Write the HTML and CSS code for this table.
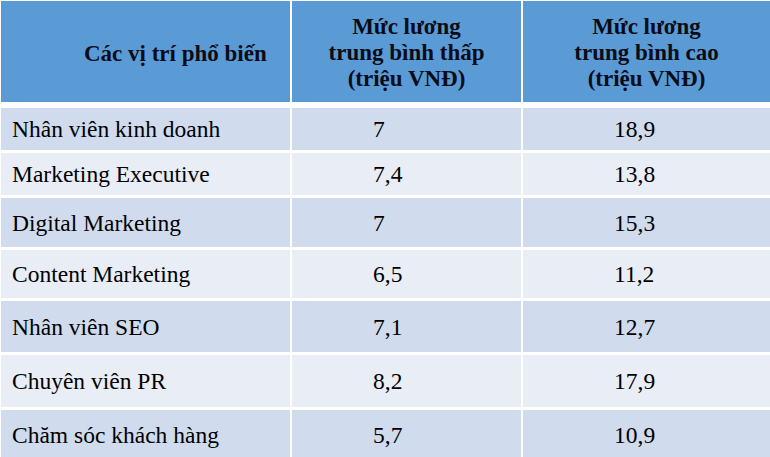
FILE: index.html
```html
<!DOCTYPE html>
<html>
<head>
<meta charset="utf-8">
<title>Mức lương</title>
<link rel="stylesheet" href="styles.css">
</head>
<body>
<div class="table">
  <div class="cell head head-first">Các vị trí phổ biến</div>
  <div class="cell head">Mức lương<br>trung bình thấp<br>(triệu VNĐ)</div>
  <div class="cell head">Mức lương<br>trung bình cao<br>(triệu VNĐ)</div>

  <div class="cell dark c1">Nhân viên kinh doanh</div>
  <div class="cell dark c2">7</div>
  <div class="cell dark c3">18,9</div>

  <div class="cell light c1">Marketing Executive</div>
  <div class="cell light c2">7,4</div>
  <div class="cell light c3">13,8</div>

  <div class="cell dark c1">Digital Marketing</div>
  <div class="cell dark c2">7</div>
  <div class="cell dark c3">15,3</div>

  <div class="cell light c1">Content Marketing</div>
  <div class="cell light c2">6,5</div>
  <div class="cell light c3">11,2</div>

  <div class="cell dark c1">Nhân viên SEO</div>
  <div class="cell dark c2">7,1</div>
  <div class="cell dark c3">12,7</div>

  <div class="cell light c1">Chuyên viên PR</div>
  <div class="cell light c2">8,2</div>
  <div class="cell light c3">17,9</div>

  <div class="cell dark c1">Chăm sóc khách hàng</div>
  <div class="cell dark c2">5,7</div>
  <div class="cell dark c3">10,9</div>
</div>
</body>
</html>
```
FILE: styles.css
```css
body {
  margin: 0;
  padding: 0;
  background: #ffffff;
  font-family: "Liberation Serif", "Times New Roman", serif;
  font-size: 23.5px;
  color: #000000;
}
.table {
  display: grid;
  grid-template-columns: 289px 229px 247px;
  grid-template-rows: 104px 42px 42px 49px 48px 51px 52px 50px;
  column-gap: 2px;
  row-gap: 3px;
  padding: 1px 0 0 1px;
}
.cell {
  display: flex;
  align-items: center;
  line-height: 26px;
}
.head {
  background: #5b9bd5;
  font-weight: bold;
  font-size: 23px;
  color: #0c0c18;
  justify-content: center;
  text-align: center;
  margin-bottom: 3px;
  padding-top: 3px;
}
.head-first {
  justify-content: flex-start;
  padding-left: 83px;
  padding-top: 4px;
}
.dark { background: #d0dbee; }
.light { background: #e9edf6; }
.c1 { padding-left: 11px; }
.c2 { padding-left: 81px; }
.c3 { padding-left: 91px; }
```
